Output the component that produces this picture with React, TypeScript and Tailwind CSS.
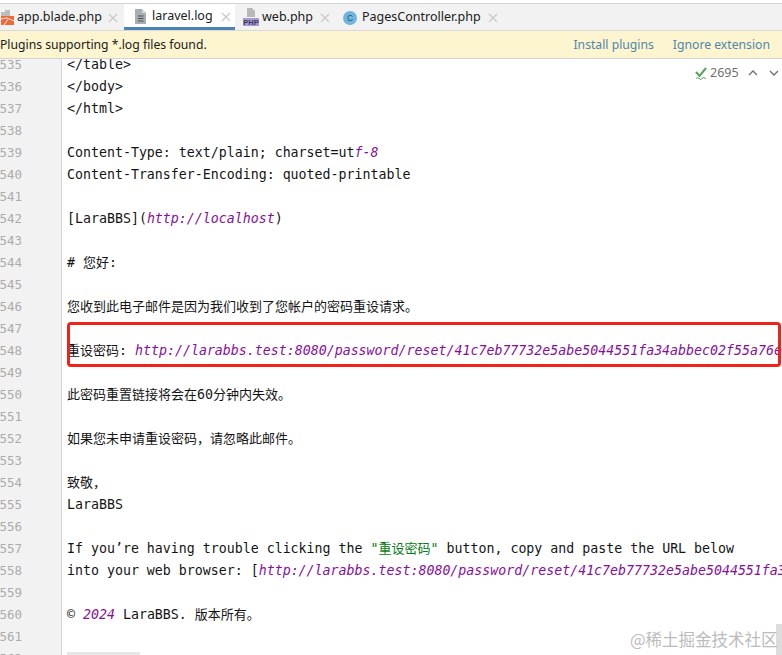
import React from "react";

const P = ({ children }: { children: React.ReactNode }) => (
  <span className="italic text-[#871094]">{children}</span>
);
const C = ({ children }: { children: React.ReactNode }) => (
  <span className="text-[13px]">{children}</span>
);

const lines: React.ReactNode[] = [
  "</table>",
  "</body>",
  "</html>",
  "",
  <>Content-Type: text/plain; charset=ut<P>f-8</P></>,
  "Content-Transfer-Encoding: quoted-printable",
  "",
  <>[LaraBBS](<P>http://localhost</P>)</>,
  "",
  <># <C>您好</C>:</>,
  "",
  <C>您收到此电子邮件是因为我们收到了您帐户的密码重设请求。</C>,
  "",
  <><C>重设密码</C>: <P>http://larabbs.test:8080/password/reset/41c7eb77732e5abe5044551fa34abbec02f55a76e</P></>,
  "",
  <><C>此密码重置链接将会在</C>60<C>分钟内失效。</C></>,
  "",
  <C>如果您未申请重设密码，请忽略此邮件。</C>,
  "",
  <C>致敬，</C>,
  "LaraBBS",
  "",
  <>If you’re having trouble clicking the <span className="text-[#067d17]">"<C>重设密码</C>"</span> button, copy and paste the URL below</>,
  <>into your web browser: [<P>http://larabbs.test:8080/password/reset/41c7eb77732e5abe5044551fa34abbec</P></>,
  "",
  <>© <P>2024</P> LaraBBS. <C>版本所有。</C></>,
  "",
  <div className="mt-[4px] h-[18px] w-[73px] bg-[#e6e6e6]" />,
];

const Close = () => (
  <svg width="10" height="10" viewBox="0 0 10 10" className="shrink-0">
    <path d="M1 1 L9 9 M9 1 L1 9" stroke="#c8c8c8" strokeWidth="1.2" fill="none" />
  </svg>
);

const BladeIcon = () => (
  <svg width="14" height="16" viewBox="0 0 14 16" className="shrink-0">
    <path d="M0 2 H4 V0 H9 V6 H0 Z" fill="#bdbdbd" />
    <path d="M0 6 H13 V15 H0 Z" fill="#ef6a3a" />
    <path d="M0 9 L6 8 L13 11 M3 15 L7 9.5" stroke="#fce6da" strokeWidth="1" fill="none" />
  </svg>
);

const LogIcon = () => (
  <svg width="12" height="15" viewBox="0 0 12 15" className="shrink-0">
    <path d="M0 0 H7 L11 4 V15 H0 Z" fill="#a9adb0" />
    <path d="M7 0 L11 4 H7 Z" fill="#d5d7d9" />
    <path d="M3 7 H8.5 M3 9.5 H8.5 M3 12 H8.5" stroke="#4c5053" strokeWidth="1" />
  </svg>
);

const PhpIcon = () => (
  <svg width="16" height="19" viewBox="0 0 16 19" className="shrink-0">
    <path d="M4 0 H9 L12 3 V9 H4 Z" fill="#b9b9b9" />
    <rect x="0" y="10" width="16" height="8" fill="#a99ad1" />
    <text x="8" y="17" textAnchor="middle" fontSize="7.5" fontWeight="700" fill="#3f3a66" fontFamily="'Liberation Sans', sans-serif">PHP</text>
  </svg>
);

const ClassIcon = () => (
  <svg width="14" height="14" viewBox="0 0 14 14" className="shrink-0">
    <circle cx="7" cy="7" r="7" fill="#6fb5de" />
    <text x="7" y="10" textAnchor="middle" fontSize="8.5" fill="#27536e" fontFamily="'Liberation Sans', sans-serif">C</text>
  </svg>
);

export default function App() {
  return (
    <div className="relative w-[782px] h-[655px] overflow-hidden bg-white font-['Noto_Sans','Noto_Sans_CJK_SC',sans-serif]">
      <div className="h-[3px] bg-white" />
      <div className="relative z-10 flex h-[28px] items-stretch border-t border-[#d4d4d4] border-b border-b-[#d8d8d8] bg-[#f2f2f2] text-[12.5px] text-[#202020]">
        <div className="flex w-[124px] items-center pl-[1px] pt-[1px]">
          <BladeIcon />
          <span className="ml-[2px]">app.blade.php</span>
          <span className="ml-[6px]"><Close /></span>
        </div>
        <div className="flex w-[111px] items-center border-b-[3px] border-[#4b83b8] bg-white pl-[11px] pt-[2px]">
          <LogIcon />
          <span className="ml-[5px]">laravel.log</span>
          <span className="ml-[8px]"><Close /></span>
        </div>
        <div className="flex items-center pl-[8px] pt-[1px]">
          <PhpIcon />
          <span className="ml-[3px]">web.php</span>
          <span className="ml-[7px]"><Close /></span>
        </div>
        <div className="flex items-center pl-[13px] pt-[1px]">
          <ClassIcon />
          <span className="ml-[5px]">PagesController.php</span>
          <span className="ml-[7px]"><Close /></span>
        </div>
      </div>
      <div className="relative z-10 flex h-[28px] items-center border-b border-[#d4d4d4] bg-[#fcf5cf] pt-[1px] text-[12.2px] text-[#202020]">
        <span>Plugins supporting *.log files found.</span>
        <span className="ml-auto text-[#4f86ad]">Install plugins</span>
        <span className="ml-[19px] mr-[12px] text-[#4f86ad]">Ignore extension</span>
      </div>
      <div className="-mt-[5px] flex h-[601px] overflow-hidden">
        <div className="w-[62px] shrink-0 overflow-hidden border-r border-[#d4d4d4] bg-[#f2f2f2] text-[12.5px] leading-[22px] text-[#acacac]">
          {lines.map((_, i) => (
            <div key={i} className="flex h-[22px] w-[22px] justify-end">
              <span className="shrink-0 font-['DejaVu_Sans_Mono',monospace]">{1535 + i}</span>
            </div>
          ))}
        </div>
        <div className="min-w-0 flex-1 overflow-hidden pl-[5px] font-['DejaVu_Sans_Mono','Noto_Sans_CJK_SC',monospace] text-[13.28px] leading-[22px] text-[#141414]">
          {lines.map((l, i) => (
            <div key={i} className="h-[22px] whitespace-pre">{l}</div>
          ))}
        </div>
      </div>

      <div className="absolute left-[67px] top-[322px] h-[45px] w-[714px] rounded-[4px] border-[3px] border-[#f0231b]" />

      <div className="absolute left-[695px] top-[64px] flex items-center text-[12.5px] text-[#707070]">
        <svg width="12" height="14" viewBox="0 0 12 14" className="shrink-0">
          <path d="M1 6 L4.5 10 L11 2" stroke="#5aa05f" strokeWidth="2" fill="none" />
          <path d="M1 12.5 Q2.5 10.5 4 12.5 T7 12.5 T11 12.5" stroke="#5aa05f" strokeWidth="1" fill="none" />
        </svg>
        <span className="ml-[3px]">2695</span>
        <svg width="12" height="8" viewBox="0 0 12 8" className="ml-[8px] shrink-0">
          <path d="M2 6 L6 2 L10 6" stroke="#6e6e6e" strokeWidth="1.3" fill="none" />
        </svg>
        <svg width="12" height="8" viewBox="0 0 12 8" className="ml-[9px] shrink-0">
          <path d="M2 2 L6 6 L10 2" stroke="#6e6e6e" strokeWidth="1.3" fill="none" />
        </svg>
      </div>

      <div className="absolute right-0 top-[624px] h-[31px] w-[6px] bg-[#dcdcdc]" />
      <div className="absolute left-[630px] top-[629px] font-['Noto_Sans_CJK_SC',sans-serif] text-[16.5px] leading-[20px] text-[#bcbcbc]">@稀土掘金技术社区</div>
    </div>
  );
}
